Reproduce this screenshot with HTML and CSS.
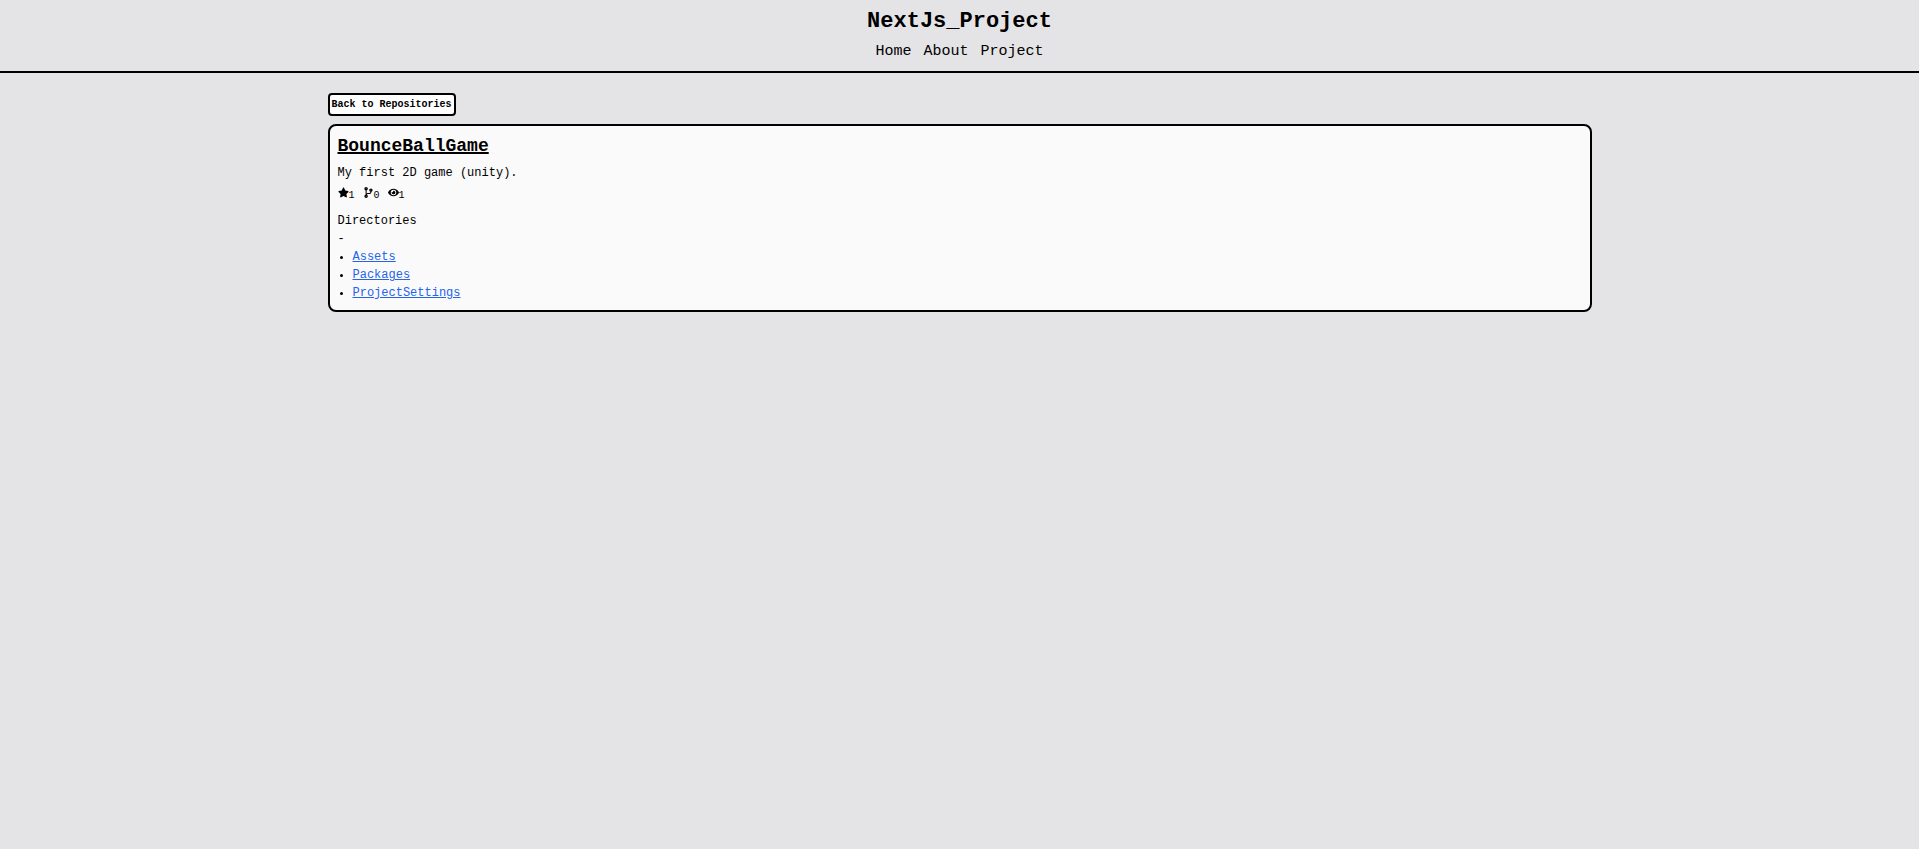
FILE: index.html
```html
<!DOCTYPE html>
<html lang="en">
<head>
<meta charset="utf-8">
<meta name="viewport" content="width=device-width, initial-scale=1">
<title>NextJs_Project</title>
<link rel="stylesheet" href="styles.css">
</head>
<body>
<header class="site-header">
  <h1 class="site-title">NextJs_Project</h1>
  <nav class="site-nav">
    <a href="#">Home</a>
    <a href="#">About</a>
    <a href="#">Project</a>
  </nav>
</header>
<main class="container">
  <button class="back-button" type="button">Back to Repositories</button>
  <section class="card">
    <h2 class="repo-name">BounceBallGame</h2>
    <p class="repo-description">My first 2D game (unity).</p>
    <div class="stats">
      <span class="stat">
        <svg class="icon" viewBox="0 0 576 512" aria-hidden="true"><path d="M259.3 17.8L194 150.2 47.9 171.5c-26.2 3.8-36.7 36.1-17.7 54.6l105.7 103-25 145.5c-4.5 26.3 23.2 46 46.4 33.7L288 439.6l130.7 68.7c23.2 12.2 50.9-7.4 46.4-33.7l-25-145.5 105.7-103c19-18.5 8.5-50.8-17.7-54.6L382 150.2 316.7 17.8c-11.7-23.6-45.6-23.9-57.4 0z"/></svg><span>1</span>
      </span>
      <span class="stat">
        <svg class="icon" viewBox="0 0 384 512" aria-hidden="true"><path d="M384 144c0-44.200-35.800-80-80-80s-80 35.800-80 80c0 36.400 24.300 67.100 57.500 76.800-.6 16.100-4.200 28.500-11 36.900-15.400 19.200-49.300 22.400-85.200 25.700-28.200 2.600-57.400 5.400-81.300 16.900v-144c32.500-10.200 56-40.500 56-76.300 0-44.200-35.800-80-80-80S0 35.800 0 80c0 35.800 23.500 66.100 56 76.300v199.300C23.500 365.900 0 396.200 0 432c0 44.200 35.800 80 80 80s80-35.800 80-80c0-34-21.200-63.100-51.200-74.600 3.100-5.200 7.800-9.800 14.900-13.400 16.200-8.200 40.400-10.400 66.100-12.800 42.200-3.900 90-8.400 118.200-43.400 14-17.400 21.100-39.800 21.600-67.900 31.600-10.800 54.400-40.700 54.400-75.900zM80 64c8.800 0 16 7.200 16 16s-7.200 16-16 16-16-7.200-16-16 7.200-16 16-16zm0 384c-8.800 0-16-7.200-16-16s7.200-16 16-16 16 7.200 16 16-7.200 16-16 16zm224-320c8.800 0 16 7.200 16 16s-7.200 16-16 16-16-7.200-16-16 7.200-16 16-16z"/></svg><span>0</span>
      </span>
      <span class="stat">
        <svg class="icon" viewBox="0 0 576 512" aria-hidden="true"><path d="M572.520 241.400C518.290 135.590 410.930 64 288 64S57.680 135.640 3.480 241.410a32.350 32.350 0 0 0 0 29.190C57.710 376.410 165.070 448 288 448s230.320-71.640 284.520-177.410a32.350 32.350 0 0 0 0-29.190zM288 400a144 144 0 1 1 144-144 143.930 143.930 0 0 1-144 144zm0-240a95.310 95.310 0 0 0-25.310 3.790 47.850 47.850 0 0 1-66.900 66.900A95.780 95.780 0 1 0 288 160z"/></svg><span>1</span>
      </span>
    </div>
    <p class="directories-title">Directories</p>
    <p class="dash">-</p>
    <ul class="directories">
      <li><a href="#">Assets</a></li>
      <li><a href="#">Packages</a></li>
      <li><a href="#">ProjectSettings</a></li>
    </ul>
  </section>
</main>
</body>
</html>
```

FILE: styles.css
```css
* {
  box-sizing: border-box;
}

body {
  margin: 0;
  background: #e4e4e6;
  color: #000;
  font-family: Consolas, "Liberation Mono", monospace;
  font-size: 12px;
  line-height: 18px;
}

h1, h2, p, ul {
  margin: 0;
}

.site-header {
  display: flex;
  flex-direction: column;
  align-items: center;
  gap: 2px;
  padding: 6px 8px 8px;
  border-bottom: 2px solid #000;
}

.site-title {
  font-size: 22px;
  line-height: 32px;
}

.site-nav {
  display: flex;
  gap: 12px;
  font-size: 15px;
  line-height: 23px;
}

.site-nav a {
  color: inherit;
  text-decoration: none;
}

.container {
  max-width: 1280px;
  margin: 0 auto;
  padding: 20px 8px;
}

.back-button {
  display: block;
  padding: 2px;
  border: 2px solid #000;
  border-radius: 4px;
  background: #fff;
  color: #000;
  font: bold 10px/15px Consolas, "Liberation Mono", monospace;
  cursor: pointer;
}

.card {
  margin-top: 8px;
  padding: 8px;
  border: 2px solid #000;
  border-radius: 8px;
  background: #fafafa;
}

.repo-name {
  font-size: 18px;
  line-height: 24px;
  text-decoration: underline 2px;
}

.repo-description {
  margin-top: 6px;
}

.stats {
  display: flex;
  gap: 8px;
  margin-top: 4px;
  font-size: 10px;
  line-height: 20px;
}

.stat {
  display: flex;
  align-items: flex-end;
}

.icon {
  width: 11px;
  height: 11px;
  margin-bottom: 8px;
  fill: currentColor;
}

.directories-title {
  margin-top: 6px;
}

.directories {
  padding-left: 15px;
}

.directories a {
  color: #2563eb;
  text-decoration: underline;
}
```
